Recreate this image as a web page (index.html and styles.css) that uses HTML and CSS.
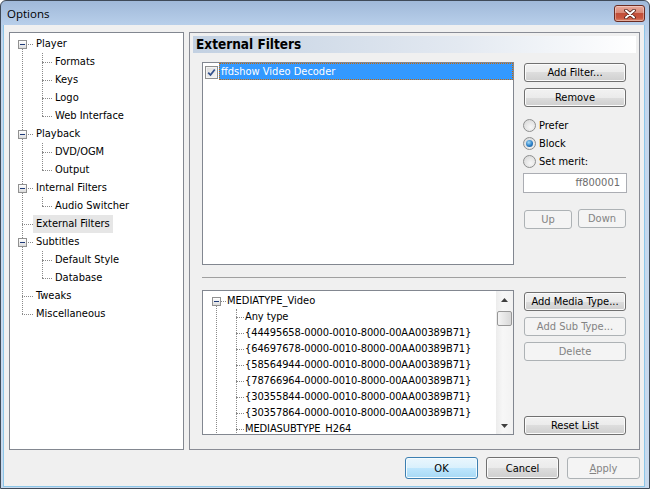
FILE: index.html
```html
<!DOCTYPE html>
<html lang="en">
<head>
    <meta charset="UTF-8">
    <title>Options</title>
    <link rel="stylesheet" href="styles.css">
</head>
<body>
    <div class="window">
        <div class="titlebar">
            <span class="title">Options</span>
            <button class="close-btn" title="Close">
                <svg width="12" height="10" viewBox="0 0 12 10">
                    <path d="M2 1.5L10 8.5M10 1.5L2 8.5" stroke="#4b1c14" stroke-width="3.6" stroke-linecap="round"/>
                    <path d="M2 1.5L10 8.5M10 1.5L2 8.5" stroke="#fff" stroke-width="2" stroke-linecap="round"/>
                </svg>
            </button>
        </div>

        <div class="client">
            <div class="main">
                <div class="nav-tree">
                    <ul class="tree">
                        <li>
                            <div class="row"><span class="exp"></span><span class="label">Player</span></div>
                            <ul class="sub">
                                <li><div class="row"><span class="label">Formats</span></div></li>
                                <li><div class="row"><span class="label">Keys</span></div></li>
                                <li><div class="row"><span class="label">Logo</span></div></li>
                                <li><div class="row"><span class="label">Web Interface</span></div></li>
                            </ul>
                        </li>
                        <li>
                            <div class="row"><span class="exp"></span><span class="label">Playback</span></div>
                            <ul class="sub">
                                <li><div class="row"><span class="label">DVD/OGM</span></div></li>
                                <li><div class="row"><span class="label">Output</span></div></li>
                            </ul>
                        </li>
                        <li>
                            <div class="row"><span class="exp"></span><span class="label">Internal Filters</span></div>
                            <ul class="sub">
                                <li><div class="row"><span class="label">Audio Switcher</span></div></li>
                            </ul>
                        </li>
                        <li><div class="row"><span class="label selected">External Filters</span></div></li>
                        <li>
                            <div class="row"><span class="exp"></span><span class="label">Subtitles</span></div>
                            <ul class="sub">
                                <li><div class="row"><span class="label">Default Style</span></div></li>
                                <li><div class="row"><span class="label">Database</span></div></li>
                            </ul>
                        </li>
                        <li><div class="row"><span class="label">Tweaks</span></div></li>
                        <li><div class="row"><span class="label">Miscellaneous</span></div></li>
                    </ul>
                </div>

                <div class="panel">
                    <div class="panel-header">External Filters</div>

                    <div class="section filters">
                        <div class="listbox">
                            <div class="filter-item">
                                <span class="checkbox">
                                    <svg width="9" height="9" viewBox="0 0 9 9"><path d="M1.2 4.6L3.5 7L7.8 1.5" fill="none" stroke="#34528e" stroke-width="1.8"/></svg>
                                </span>
                                <span class="filter-name">ffdshow Video Decoder</span>
                            </div>
                        </div>
                        <div class="side">
                            <button class="btn">Add Filter...</button>
                            <button class="btn gap">Remove</button>
                            <div class="radios">
                                <label class="radio-row"><span class="radio"></span>Prefer</label>
                                <label class="radio-row"><span class="radio checked"></span>Block</label>
                                <label class="radio-row"><span class="radio"></span>Set merit:</label>
                            </div>
                            <div class="merit">ff800001</div>
                            <div class="updown">
                                <button class="btn" disabled>Up</button>
                                <button class="btn" disabled>Down</button>
                            </div>
                        </div>
                    </div>

                    <div class="separator"></div>

                    <div class="section types">
                        <div class="listbox typebox">
                            <div class="type-tree">
                                <ul class="mtree">
                                    <li>
                                        <div class="mrow"><span class="exp"></span><span class="mlabel">MEDIATYPE_Video</span></div>
                                        <ul class="msub">
                                            <li><div class="mrow"><span class="mlabel">Any type</span></div></li>
                                            <li><div class="mrow"><span class="mlabel">{44495658-0000-0010-8000-00AA00389B71}</span></div></li>
                                            <li><div class="mrow"><span class="mlabel">{64697678-0000-0010-8000-00AA00389B71}</span></div></li>
                                            <li><div class="mrow"><span class="mlabel">{58564944-0000-0010-8000-00AA00389B71}</span></div></li>
                                            <li><div class="mrow"><span class="mlabel">{78766964-0000-0010-8000-00AA00389B71}</span></div></li>
                                            <li><div class="mrow"><span class="mlabel">{30355844-0000-0010-8000-00AA00389B71}</span></div></li>
                                            <li><div class="mrow"><span class="mlabel">{30357864-0000-0010-8000-00AA00389B71}</span></div></li>
                                            <li><div class="mrow"><span class="mlabel">MEDIASUBTYPE_H264</span></div></li>
                                        </ul>
                                    </li>
                                </ul>
                            </div>
                            <div class="scrollbar">
                                <div class="sb-arrow">
                                    <svg width="7" height="4" viewBox="0 0 7 4"><path d="M0 4L3.5 0L7 4Z" fill="#404040"/></svg>
                                </div>
                                <div class="sb-thumb"></div>
                                <div class="sb-track"></div>
                                <div class="sb-arrow">
                                    <svg width="7" height="4" viewBox="0 0 7 4"><path d="M0 0L3.5 4L7 0Z" fill="#404040"/></svg>
                                </div>
                            </div>
                        </div>
                        <div class="side">
                            <button class="btn media">Add Media Type...</button>
                            <button class="btn gap" disabled>Add Sub Type...</button>
                            <button class="btn gap" disabled>Delete</button>
                            <button class="btn reset">Reset List</button>
                        </div>
                    </div>
                </div>
            </div>

            <div class="footer">
                <button class="btn dlg default">OK</button>
                <button class="btn dlg">Cancel</button>
                <button class="btn dlg" disabled><u>A</u>pply</button>
            </div>
        </div>
    </div>
</body>
</html>
```

FILE: styles.css
```css
body {
    margin: 0;
    font-family: "DejaVu Sans Condensed", "DejaVu Sans", sans-serif;
    font-size: 11px;
    color: #000;
}
ul {
    list-style: none;
    margin: 0;
    padding: 0;
}
.window {
    width: 650px;
    height: 489px;
    box-sizing: border-box;
    border: 1px solid #3f4a58;
    border-radius: 6px 6px 0 0;
    background: linear-gradient(#a0b9d9, #b8cfea 24px, #c3d6ec 40px, #c8daee);
    padding: 0 4px 1px 2px;
    display: flex;
    flex-direction: column;
    overflow: hidden;
}
.titlebar {
    height: 24px;
    flex: none;
    display: flex;
    align-items: flex-start;
    justify-content: space-between;
}
.title {
    font-family: "Open Sans", sans-serif;
    font-size: 11.5px;
    padding: 5px 0 0 4px;
    color: #000;
}
.close-btn {
    width: 31px;
    height: 17px;
    margin-top: 4px;
    padding: 0;
    border: 1px solid #6b2c22;
    border-radius: 3px;
    background: linear-gradient(#e9a99b 0%, #d98a78 45%, #c14e38 50%, #c9563f 80%, #dc8a6f 100%);
    box-shadow: inset 0 0 0 1px rgba(255,255,255,0.35);
    display: flex;
    align-items: center;
    justify-content: center;
}
.client {
    flex: 1;
    background: #f0f0f0;
    border: 1px solid #8cc6e8;
    border-top: none;
    padding: 7px 4px 7px 5px;
    display: flex;
    flex-direction: column;
}
.main {
    height: 418px;
    display: flex;
    gap: 5px;
}

/* left navigation tree */
.nav-tree {
    width: 175px;
    flex: none;
    box-sizing: border-box;
    border: 1px solid #828790;
    background: #fff;
    padding-top: 2px;
}
.tree {
    position: relative;
}
.tree::before {
    content: '';
    position: absolute;
    left: 12px;
    top: 14px;
    bottom: 9px;
    border-left: 1px dotted #8a8a8a;
}
.row {
    height: 18px;
    display: flex;
    align-items: center;
    position: relative;
    white-space: nowrap;
}
.tree > li > .row::before {
    content: '';
    position: absolute;
    left: 12px;
    top: 9px;
    width: 11px;
    border-top: 1px dotted #8a8a8a;
}
.sub {
    position: relative;
}
.sub::before {
    content: '';
    position: absolute;
    left: 32px;
    top: 0;
    bottom: 9px;
    border-left: 1px dotted #8a8a8a;
}
.sub .row::before {
    content: '';
    position: absolute;
    left: 32px;
    top: 9px;
    width: 10px;
    border-top: 1px dotted #8a8a8a;
}
.exp {
    position: absolute;
    left: 8px;
    top: 5px;
    width: 9px;
    height: 9px;
    box-sizing: border-box;
    border: 1px solid #919191;
    background: linear-gradient(#ffffff, #dcdcdc);
    z-index: 1;
}
.exp::after {
    content: '';
    position: absolute;
    left: 1px;
    top: 3px;
    width: 5px;
    height: 1px;
    background: #1e3a78;
}
.label {
    margin-left: 23px;
    padding: 0 3px;
    line-height: 18px;
}
.sub .label {
    margin-left: 42px;
}
.label.selected {
    background: #e6e6e6;
}

/* right panel */
.panel {
    flex: 1;
    border: 1px solid #898c95;
    display: flex;
    flex-direction: column;
}
.panel-header {
    margin: 3px 3px 0;
    height: 17px;
    padding-left: 3px;
    background: linear-gradient(to right, #c3d1e2, #e3e9f1 60%, #ffffff);
    font-weight: bold;
    font-size: 13.5px;
    line-height: 17px;
}
.section {
    display: flex;
    gap: 10px;
    margin-left: 12px;
}
.filters {
    margin-top: 9px;
}
.listbox {
    width: 312px;
    height: 203px;
    flex: none;
    box-sizing: border-box;
    border: 1px solid #828790;
    background: #fff;
}
.side {
    width: 102px;
    display: flex;
    flex-direction: column;
}
.filter-item {
    height: 17px;
    display: flex;
    align-items: flex-start;
}
.checkbox {
    width: 13px;
    height: 13px;
    box-sizing: border-box;
    margin: 3px 1px 0 2px;
    border: 1px solid #8e8f8f;
    background: linear-gradient(135deg, #dcdcdc, #f6f6f6);
    box-shadow: inset 0 0 0 1px #f4f4f4;
    display: flex;
    align-items: center;
    justify-content: center;
}
.filter-name {
    flex: 1;
    height: 17px;
    box-sizing: border-box;
    background: #3399ff;
    color: #fff;
    border: 1px dotted #cc6600;
    padding: 1px 0 0 1px;
    line-height: 14px;
}

.btn {
    font: inherit;
    height: 19px;
    box-sizing: border-box;
    padding: 0;
    color: #000;
    border: 1px solid #707070;
    border-radius: 3px;
    background: linear-gradient(#f2f2f2 0%, #ebebeb 50%, #dddddd 50%, #cfcfcf 100%);
    box-shadow: inset 0 0 0 1px #fbfbfb;
}
.btn:disabled {
    color: #838383;
    border-color: #adb2b5;
    background: #f4f4f4;
    box-shadow: none;
}
.btn.default {
    border-color: #3c7fb1;
    background: linear-gradient(#eaf6fd 0%, #d9f0fc 50%, #bee6fd 50%, #a7d9f5 100%);
    box-shadow: inset 0 0 0 1px #f3fbfe;
}
.filters .side .btn:first-child {
    margin-top: 1px;
}
.gap {
    margin-top: 6px;
}
.radios {
    margin-top: 9px;
}
.radio-row {
    height: 18px;
    margin-left: -1px;
    display: flex;
    align-items: center;
    gap: 3px;
}
.radio {
    width: 13px;
    height: 13px;
    box-sizing: border-box;
    border-radius: 50%;
    border: 1px solid #8e8f8f;
    background: radial-gradient(circle at 60% 65%, #f7f7f7, #d4d4d4);
    display: flex;
    align-items: center;
    justify-content: center;
}
.radio.checked::after {
    content: '';
    width: 7px;
    height: 7px;
    border-radius: 50%;
    background: radial-gradient(circle at 40% 35%, #a6dcf8, #2a7ec6 55%, #0e4a86);
}
.merit {
    height: 20px;
    box-sizing: border-box;
    margin: 3px -1px 0;
    border: 1px solid #abadb3;
    background: #fff;
    color: #6d6d6d;
    text-align: right;
    padding-right: 6px;
    line-height: 18px;
}
.updown {
    display: flex;
    gap: 6px;
    margin-top: 16px;
}
.updown .btn {
    width: 48px;
}
.separator {
    margin: 12px 0 0 12px;
    width: 424px;
    border-top: 1px solid #a0a0a0;
}

/* media types */
.types {
    margin-top: 12px;
    height: 145px;
}
.typebox {
    height: 145px;
    display: flex;
}
.type-tree {
    flex: 1;
    overflow: hidden;
    padding-top: 2px;
}
.mtree {
    position: relative;
}
.mtree::before {
    content: '';
    position: absolute;
    left: 13px;
    top: 13px;
    bottom: -20px;
    border-left: 1px dotted #8a8a8a;
}
.mrow {
    height: 16px;
    display: flex;
    align-items: center;
    position: relative;
    white-space: nowrap;
}
.mtree > li > .mrow::before {
    content: '';
    position: absolute;
    left: 13px;
    top: 8px;
    width: 10px;
    border-top: 1px dotted #8a8a8a;
}
.mtree .exp {
    left: 9px;
    top: 4px;
}
.msub {
    position: relative;
}
.msub::before {
    content: '';
    position: absolute;
    left: 33px;
    top: 0;
    bottom: -20px;
    border-left: 1px dotted #8a8a8a;
}
.msub .mrow::before {
    content: '';
    position: absolute;
    left: 33px;
    top: 8px;
    width: 8px;
    border-top: 1px dotted #8a8a8a;
}
.mlabel {
    margin-left: 24px;
    line-height: 16px;
}
.msub .mlabel {
    margin-left: 42px;
    letter-spacing: -0.1px;
}
.scrollbar {
    width: 17px;
    display: flex;
    flex-direction: column;
    background: linear-gradient(to right, #ececec, #f7f7f7 40%, #f2f2f2);
}
.sb-arrow {
    height: 17px;
    display: flex;
    align-items: center;
    justify-content: center;
}
.sb-thumb {
    height: 15px;
    margin: 3px 1px 0;
    box-sizing: border-box;
    border: 1px solid #979797;
    border-radius: 2px;
    background: linear-gradient(to right, #f4f4f4, #e6e6e6 50%, #d8d8d8);
}
.sb-track {
    flex: 1;
}
.types .side .media {
    margin-top: 2px;
}
.reset {
    margin-top: auto;
}

.footer {
    margin-top: 7px;
    display: flex;
    justify-content: flex-end;
    gap: 8px;
}
.btn.dlg {
    width: 73px;
    height: 22px;
}
```
